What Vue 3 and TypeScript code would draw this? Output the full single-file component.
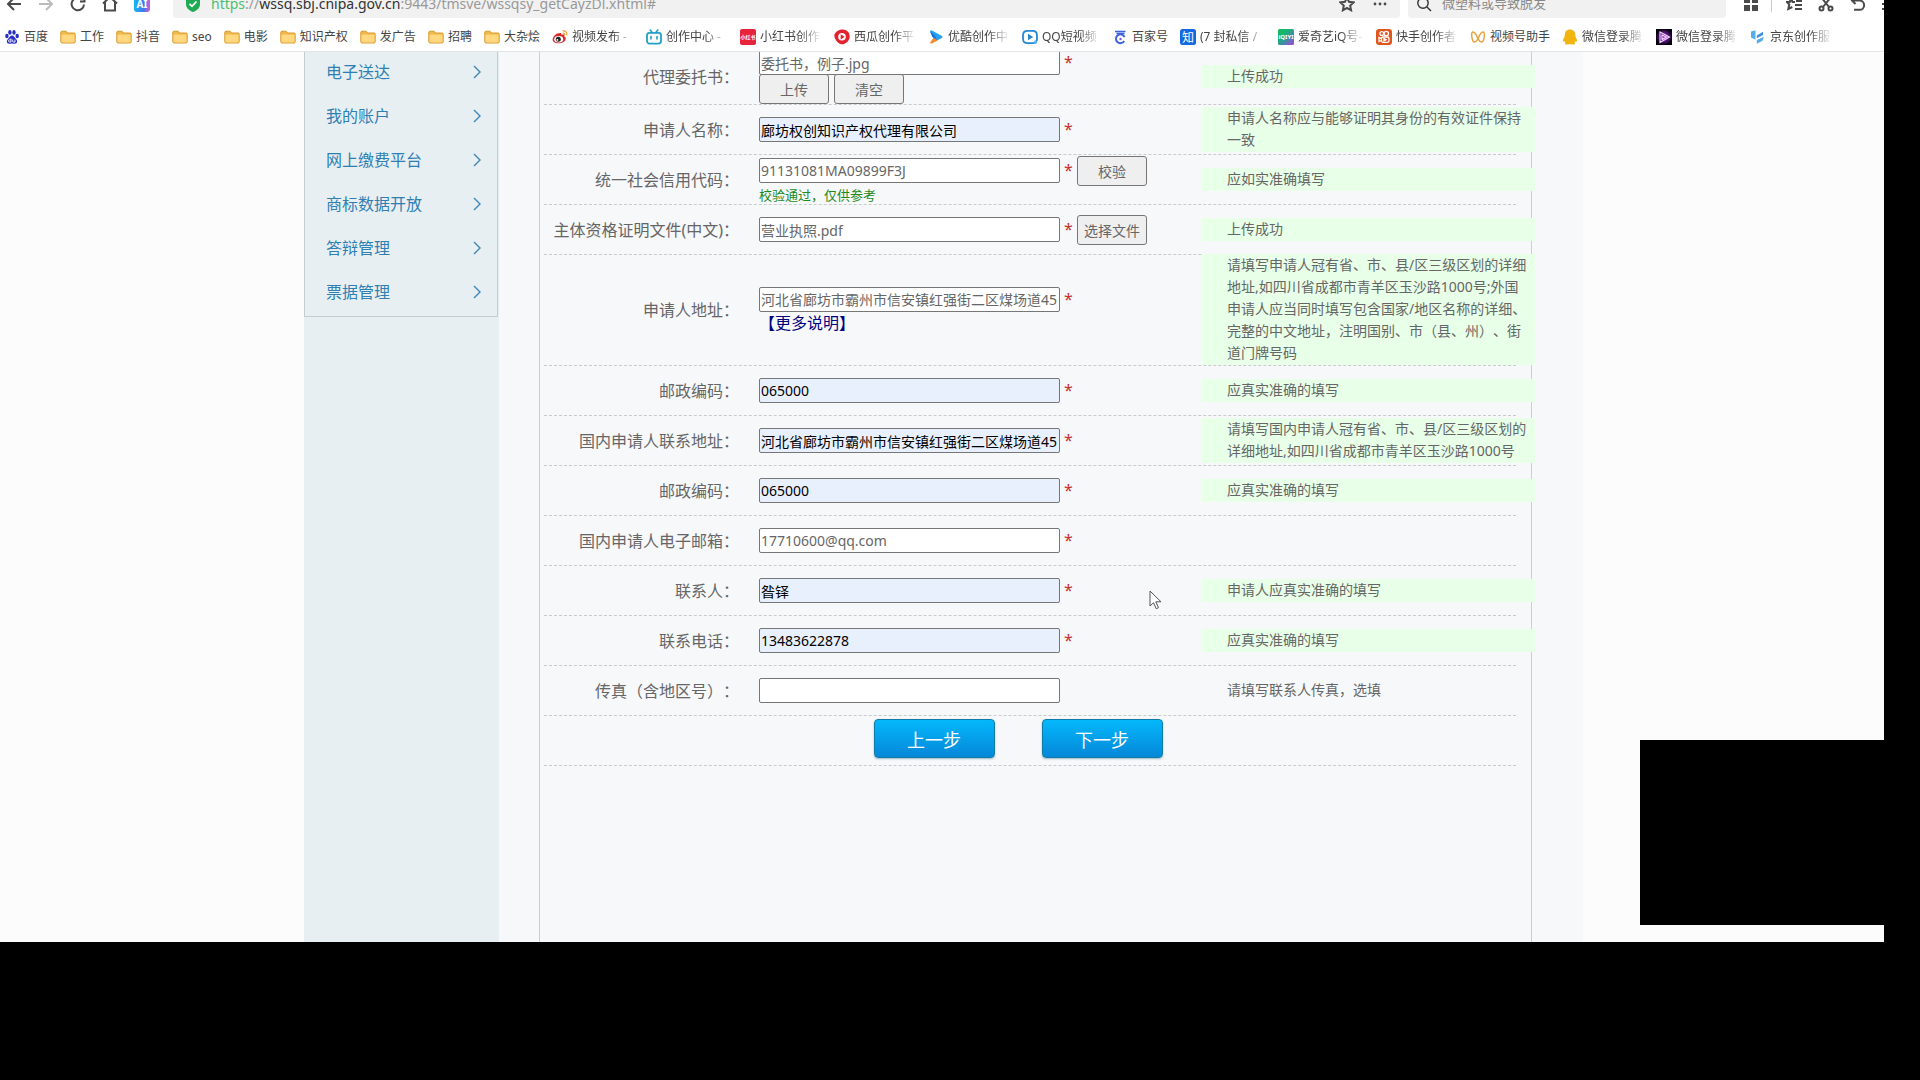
<script setup lang="ts">
import { ref } from 'vue'

interface Bookmark { label: string; icon: string; size?: 'short' | 'long' | 'wide' }
interface Field {
  id: string
  label: string
  value: string
  filled?: boolean
  required?: boolean
  action?: string
  below?: string[]
  note?: string
  more?: string
  hint?: string
  ok?: boolean
}

const icons: Record<string, string> = {
  folder: '<path d="M.8 3.4q0-1.2 1.2-1.2h4l1.6 1.8H14q1.200 0 1.200 1.200v7.600q0 1.200-1.200 1.200H2q-1.200 0-1.200-1.200z" fill="#f0b849" stroke="#d99a2b"/><path d="M1.500 6.300q0-.8.800-.8h11.400q.8 0 .8.800v6.300q0 .8-.8.800H2.300q-.8 0-.8-.8z" fill="#ffd77e"/>',
  baidu: '<g fill="#2a2fc4"><ellipse cx="2.900" cy="7" rx="1.700" ry="2.200"/><ellipse cx="5.900" cy="3.400" rx="1.700" ry="2.300"/><ellipse cx="10" cy="3.400" rx="1.700" ry="2.300"/><ellipse cx="13.200" cy="7" rx="1.700" ry="2.200"/><path d="M8 6.600c2 0 2.400 2 4 3.400 1.900 1.800 1.400 4.700-1.200 4.700-1.200 0-1.700-.3-2.800-.3s-1.600.3-2.800.3c-2.600 0-3.100-2.900-1.200-4.700 1.600-1.400 2-3.400 4-3.400z"/></g><path d="M7 9.500v3.500H5.600a1 1 0 0 1 0-2.200H7M8.700 10.600v1.700q0 .8.800.8H11v-2.500" fill="none" stroke="#fff" stroke-width=".9"/>',
  weibo: '<path d="M7 4.500c1.500-.8 2.800-.4 2.300 1.300 2-.8 3.700-.2 2.900 1.500 3 1.200 2 6.700-5.200 7C2.600 14.500.3 12.300.7 9.900 1.200 7.300 4.900 3.600 7 4.500z" fill="#d52b2b"/><ellipse cx="6.700" cy="10.300" rx="4.500" ry="3.200" fill="#fff"/><circle cx="6.300" cy="10.300" r="2.500" fill="#222"/><circle cx="5.400" cy="10.900" r=".9" fill="#fff"/><path d="M10.500 2c3-.6 5 1.500 4.300 4.400M10.700 4.200c1.400-.2 2.200.6 2 2" fill="none" stroke="#f29a2e" stroke-width="1.200"/>',
  bili: '<rect x="1" y="3.800" width="14" height="10.800" rx="2.500" fill="none" stroke="#23a0c8" stroke-width="1.800"/><path d="M4.200 1l2 2.500M11.800 1l-2 2.500M5 7.500v2.500M11 7.500v2.500" stroke="#23a0c8" stroke-width="1.600" stroke-linecap="round"/>',
  red: '<rect width="16" height="16" rx="2" fill="#e8243c"/><text x="8" y="10" font-size="5" fill="#fff" text-anchor="middle" font-weight="700">小红书</text>',
  xigua: '<path d="M9 .6c4 .2 7 3.200 6.700 7.300-.3 4-4.200 7.500-8.200 7.400C4 15.200.2 9.500.3 6.500.500 3.200 5 .4 9 .6z" fill="#e32330"/><circle cx="8" cy="7.800" r="3.800" fill="#fff"/><path d="M6.700 5.200l4 2.600-4 2.600z" fill="#e32330"/>',
  youku: '<path d="M2 2.300q.8-1.500 2.400-.6L14 7q1.200 1-.2 2L9 11.500 4.500 8z" fill="#25a2ee"/><path d="M2 13.700q.8 1.400 2.400.6L9.500 11.400 6 8z" fill="#f58a2b"/><path d="M2 2.300L4.500 8 9 11l-2.500-5z" fill="#1a6fe0"/>',
  qq: '<path d="M5.500 1.800h5q4.500 0 4.500 4.500v3.400q0 4.500-4.500 4.500h-5Q1 14.200 1 9.700V6.300q0-4.500 4.500-4.500z" fill="none" stroke="#2488d6" stroke-width="1.800"/><path d="M6 4.800l5.200 3.200L6 11.200z" fill="#2488d6"/><circle cx="13.400" cy="13.200" r="1.600" fill="#55b3f0"/>',
  baijia: '<path d="M3 2.500h10.500M4.500 4.500h8" stroke="#3f62dc" stroke-width="1.500"/><path d="M12.500 8.200A4.400 4.400 0 1 0 12.200 11.900" fill="none" stroke="#3f62dc" stroke-width="2"/><circle cx="8.500" cy="10" r="1.200" fill="#7b5be0"/>',
  zhihu: '<rect width="16" height="16" rx="2.500" fill="#1468e0"/><text x="8" y="12.500" font-size="12" fill="#fff" text-anchor="middle">知</text>',
  iqiyi: '<defs><linearGradient id="iq" x1="0" y1="0" x2="1" y2="1"><stop offset=".3" stop-color="#14b868"/><stop offset=".6" stop-color="#3f8fa8"/><stop offset="1" stop-color="#b23fd8"/></linearGradient></defs><rect width="16" height="16" rx="1.500" fill="url(#iq)"/><text x="8" y="10" font-size="6" fill="#fff" text-anchor="middle" font-weight="700">iQIYI</text>',
  kuaishou: '<rect width="16" height="16" rx="3" fill="#e0561c"/><g fill="none" stroke="#fff" stroke-width="1.300"><circle cx="5.800" cy="4.600" r="1.900"/><circle cx="10.300" cy="4.500" r="2.200"/><rect x="5.500" y="8" width="7.500" height="5.300" rx="1.500"/><path d="M5.500 9.700L3 8.600v4l2.500-1.100M8 9.500v2.300l2-1.100z"/></g>',
  channels: '<path d="M8 9.800C6.500 6 4.500 2.700 2.800 3 .6 3.400 2 13 4.300 13 5.800 13 7 11.500 8 9.800zM8 9.800C9.500 6 11.500 2.700 13.200 3c2.200.4.8 10-1.500 10C10.200 13 9 11.500 8 9.800z" fill="none" stroke="#eaa13c" stroke-width="1.500"/>',
  penguin: '<path d="M8 .6c3.500 0 5.200 2.500 5.200 5.400 0 2 1.800 4 1.900 5.700 0 1-.8 1-1.500.2-.3 1-.8 1.500-1.200 1.900.8.400 1.200 1.800-.9 1.800-1.500 0-2.600-.2-3.500-.6-.9.400-2 .6-3.500.6-2.100 0-1.700-1.400-.9-1.800-.4-.4-.9-.9-1.200-1.900-.7.800-1.500.8-1.500-.2C1 10 2.800 8 2.800 6 2.800 3.100 4.500.6 8 .6z" fill="#f2b50f"/>',
  tplay: '<defs><radialGradient id="tp"><stop offset="0" stop-color="#b82ad8"/><stop offset=".55" stop-color="#571680"/><stop offset="1" stop-color="#06030c"/></radialGradient></defs><rect width="16" height="16" fill="url(#tp)"/><path d="M4 3l9.500 5L4 13.500zM6 6l4.500 2L6 10.500z" fill="none" stroke="#f3d8ff" stroke-width="1.100"/>',
  jd: '<path d="M1 2.500l4.500-1.300v9.500L1 8.500z" fill="#54aeea"/><path d="M6.800 6.500L13 2.800v3.300L6.800 9.300z" fill="#3f8fe0"/><path d="M6.800 11l7-3.300-1.300 4-5.700 3z" fill="#54aeea"/>',
}

const bookmarks: Bookmark[] = [
  { label: '百度', icon: 'baidu' },
  { label: '工作', icon: 'folder' },
  { label: '抖音', icon: 'folder' },
  { label: 'seo', icon: 'folder' },
  { label: '电影', icon: 'folder' },
  { label: '知识产权', icon: 'folder' },
  { label: '发广告', icon: 'folder' },
  { label: '招聘', icon: 'folder' },
  { label: '大杂烩', icon: 'folder' },
  { label: '视频发布 -', icon: 'weibo', size: 'long' },
  { label: '创作中心 -', icon: 'bili', size: 'long' },
  { label: '小红书创作', icon: 'red', size: 'long' },
  { label: '西瓜创作平', icon: 'xigua', size: 'long' },
  { label: '优酷创作中', icon: 'youku', size: 'long' },
  { label: 'QQ短视频', icon: 'qq', size: 'short' },
  { label: '百家号', icon: 'baijia' },
  { label: '(7 封私信 /', icon: 'zhihu', size: 'wide' },
  { label: '爱奇艺iQ号-', icon: 'iqiyi', size: 'wide' },
  { label: '快手创作者', icon: 'kuaishou', size: 'long' },
  { label: '视频号助手', icon: 'channels' },
  { label: '微信登录腾', icon: 'penguin', size: 'long' },
  { label: '微信登录腾', icon: 'tplay', size: 'long' },
  { label: '京东创作服', icon: 'jd', size: 'long' },
]

const menu: string[] = ['电子送达', '我的账户', '网上缴费平台', '商标数据开放', '答辩管理', '票据管理']

const fields = ref<Field[]>([
  { id: 'proxy', label: '代理委托书：', value: '委托书，例子.jpg', required: true, below: ['上传', '清空'], hint: '上传成功', ok: true },
  { id: 'name', label: '申请人名称：', value: '廊坊权创知识产权代理有限公司', filled: true, required: true, hint: '申请人名称应与能够证明其身份的有效证件保持一致', ok: true },
  { id: 'code', label: '统一社会信用代码：', value: '91131081MA09899F3J', required: true, action: '校验', note: '校验通过，仅供参考', hint: '应如实准确填写', ok: true },
  { id: 'cert', label: '主体资格证明文件(中文)：', value: '营业执照.pdf', required: true, action: '选择文件', hint: '上传成功', ok: true },
  { id: 'address', label: '申请人地址：', value: '河北省廊坊市霸州市信安镇红强街二区煤场道45', required: true, more: '【更多说明】', hint: '请填写申请人冠有省、市、县/区三级区划的详细地址,如四川省成都市青羊区玉沙路1000号;外国申请人应当同时填写包含国家/地区名称的详细、完整的中文地址，注明国别、市（县、州）、街道门牌号码', ok: true },
  { id: 'zip', label: '邮政编码：', value: '065000', filled: true, required: true, hint: '应真实准确的填写', ok: true },
  { id: 'contact-address', label: '国内申请人联系地址：', value: '河北省廊坊市霸州市信安镇红强街二区煤场道45', filled: true, required: true, hint: '请填写国内申请人冠有省、市、县/区三级区划的详细地址,如四川省成都市青羊区玉沙路1000号', ok: true },
  { id: 'contact-zip', label: '邮政编码：', value: '065000', filled: true, required: true, hint: '应真实准确的填写', ok: true },
  { id: 'email', label: '国内申请人电子邮箱：', value: '17710600@qq.com', required: true },
  { id: 'contact', label: '联系人：', value: '昝铎', filled: true, required: true, hint: '申请人应真实准确的填写', ok: true },
  { id: 'phone', label: '联系电话：', value: '13483622878', filled: true, required: true, hint: '应真实准确的填写', ok: true },
  { id: 'fax', label: '传真（含地区号）：', value: '', hint: '请填写联系人传真，选填' },
])
</script>

<template>
  <div class="desktop">
    <div class="browser">
      <header class="toolbar">
        <nav class="nav">
          <button class="tool" aria-label="后退"><svg viewBox="0 0 16 16"><path d="M15 8H2M8 2L2 8l6 6" /></svg></button>
          <button class="tool off" aria-label="前进"><svg viewBox="0 0 16 16"><path d="M1 8h13M8 2l6 6-6 6" /></svg></button>
          <button class="tool" aria-label="刷新"><svg viewBox="0 0 16 16"><path d="M14 8.500A6.200 6.200 0 1 1 12 3.500M14.500 1v4.500H10" /></svg></button>
          <button class="tool" aria-label="主页"><svg viewBox="0 0 16 16"><path d="M1 7.500L8 1l7 6.500M3 6v8.500h10V6" /></svg></button>
          <button class="tool" aria-label="AI">
            <svg viewBox="0 0 16 16" class="solid">
              <defs><linearGradient id="ai" x1="0" x2="1"><stop offset="0" stop-color="#18b6f2" /><stop offset=".6" stop-color="#3d7cf0" /><stop offset="1" stop-color="#d95ad0" /></linearGradient></defs>
              <rect width="16" height="16" rx="3" fill="url(#ai)" /><text x="8" y="12" font-size="10" font-weight="700" fill="#fff" text-anchor="middle">AI</text>
            </svg>
          </button>
        </nav>
        <div class="address">
          <svg viewBox="0 0 16 16" class="shield"><path d="M8 0l7 2v6c0 4-3 6.500-7 8-4-1.500-7-4-7-8V2z" fill="#1faa53" /><path d="M4.500 7.800l2.500 2.500 4.500-4.800" fill="none" stroke="#fff" stroke-width="1.800" /></svg>
          <span class="url"><span class="scheme">https</span>://<b>wssq.sbj.cnipa.gov.cn</b>:9443/tmsve/wssqsy_getCayzDl.xhtml#</span>
          <button class="tool" aria-label="收藏"><svg viewBox="0 0 16 16"><path d="M8 1.500l2 4.300 4.700.6-3.500 3.200.9 4.700L8 12l-4.100 2.300.9-4.700L1.300 6.400 6 5.800z" /></svg></button>
          <button class="tool" aria-label="更多"><svg viewBox="0 0 16 16" class="fill"><circle cx="3" cy="8" r="1.400" /><circle cx="8" cy="8" r="1.400" /><circle cx="13" cy="8" r="1.400" /></svg></button>
        </div>
        <div class="search">
          <svg viewBox="0 0 16 16" class="glass"><circle cx="7" cy="7" r="5.200" /><path d="M11 11l4 4" /></svg>
          <input aria-label="搜索" value="微塑料或导致脱发">
        </div>
        <div class="extras">
          <button class="tool" aria-label="应用"><svg viewBox="0 0 16 16" class="fill"><path d="M1 1h6v6H1zM9 1h6v6H9zM1 9h6v6H1zM9 9h6v6H9z" /></svg></button>
          <i class="split"></i>
          <button class="tool" aria-label="收藏夹"><svg viewBox="0 0 16 16"><path d="M9 6H6.500L5 2 3.800 6H.8l2.500 2.500-1 4.500 4-2M10 5h6M9 9h7M9 13h7" /></svg></button>
          <button class="tool" aria-label="截图"><svg viewBox="0 0 16 16"><path d="M3 1l8 10M13 1L5 11" /><circle cx="3.500" cy="12.500" r="2" /><circle cx="12.500" cy="12.500" r="2" /></svg></button>
          <button class="tool" aria-label="恢复"><svg viewBox="0 0 16 16"><path d="M5.500 1L2 4.500 5.500 8M2 4.500h7.500a4.600 4.600 0 0 1 0 9.300H4" /></svg></button>
          <button class="tool" aria-label="菜单"><svg viewBox="0 0 16 16"><path d="M0 3h16M0 8h16M0 13h16" /></svg></button>
        </div>
      </header>

      <nav class="bookmarks">
        <a v-for="(b, i) in bookmarks" :key="i" href="#" class="bookmark">
          <svg viewBox="0 0 16 16" v-html="icons[b.icon]"></svg>
          <span :class="b.size">{{ b.label }}</span>
        </a>
      </nav>

      <main class="page">
        <aside class="sidebar">
          <ul class="menu">
            <li v-for="item in menu" :key="item">
              <a href="#">{{ item }}<svg viewBox="0 0 8 14"><path d="M1 1l6 6-6 6" /></svg></a>
            </li>
          </ul>
        </aside>
        <section class="content">
          <form class="form" @submit.prevent>
            <div v-for="f in fields" :key="f.id" class="row" :class="{ tall: f.below }">
              <label :for="f.id">{{ f.label }}</label>
              <div class="control">
                <div class="line">
                  <input :id="f.id" v-model="f.value" type="text" :class="{ filled: f.filled }">
                  <span v-if="f.required" class="star">*</span>
                  <button v-if="f.action" type="button" class="plain">{{ f.action }}</button>
                </div>
                <div v-if="f.below" class="pair">
                  <button v-for="b in f.below" :key="b" type="button" class="plain">{{ b }}</button>
                </div>
                <p v-if="f.note" class="note">{{ f.note }}</p>
                <a v-if="f.more" href="#" class="more">{{ f.more }}</a>
              </div>
              <p v-if="f.hint" class="hint" :class="{ ok: f.ok }">{{ f.hint }}</p>
            </div>
            <div class="steps">
              <button type="button">上一步</button>
              <button type="button">下一步</button>
            </div>
          </form>
        </section>
      </main>

      <div class="blackout"></div>
      <svg class="cursor" viewBox="0 0 13 20"><path d="M1 1v15l3.500-3.300 2.700 6 2.300-1-2.700-5.900H12z" /></svg>
    </div>
  </div>
</template>

<style>
body {
  margin: 0;
  background: #000;
}
</style>

<style scoped>
.desktop {
  box-sizing: border-box;
  display: flex;
  min-height: 100vh;
  padding: 0 36px 138px 0;
  background: #000;
  color: #666;
  font-family: "Noto Sans", "Noto Sans CJK SC", sans-serif;
  text-spacing-trim: space-all;
}
.browser {
  position: relative;
  display: flex;
  flex: 1;
  flex-direction: column;
  min-width: 0;
  overflow: hidden;
  background: #fcfcfc;
}
button, input {
  font-family: inherit;
}
p, ul {
  margin: 0;
  padding: 0;
}
a {
  text-decoration: none;
}

.toolbar, .bookmarks {
  position: relative;
  z-index: 1;
  display: flex;
  flex: none;
  overflow: hidden;
  background: #fff;
}
.toolbar {
  align-items: flex-end;
  height: 18px;
}
.nav, .address, .search, .extras {
  box-sizing: border-box;
  display: flex;
  flex: none;
  align-items: center;
  height: 28px;
}
.nav {
  gap: 16px;
  padding: 0 23px 0 6px;
}
.tool {
  flex: none;
  width: 16px;
  height: 16px;
  padding: 0;
  border: 0;
  background: none;
}
.tool svg, .glass {
  display: block;
  width: 16px;
  height: 16px;
  fill: none;
  stroke: #4a4a4a;
  stroke-width: 2;
}
.tool.off svg {
  stroke: #bbb;
}
.tool .solid {
  stroke: none;
}
.tool .fill {
  fill: #4a4a4a;
  stroke: none;
}
.address {
  flex: 1;
  gap: 17px;
  min-width: 0;
  padding: 0 12px;
  border-radius: 4px;
  background: #f1f1f1;
}
.shield {
  flex: none;
  width: 16px;
  height: 16px;
}
.url {
  flex: 1;
  margin-left: -7px;
  color: #999;
  font-size: 14px;
  line-height: 20px;
  white-space: nowrap;
}
.url b {
  color: #333;
  font-weight: 400;
}
.scheme {
  color: #4cbf72;
}
.search {
  gap: 10px;
  width: 318px;
  margin-left: 8px;
  padding: 0 8px;
  border-radius: 4px;
  background: #f1f1f1;
}
.glass {
  flex: none;
  stroke: #333;
  stroke-width: 1.400;
}
.search input {
  flex: 1;
  min-width: 0;
  padding: 0 0 3px;
  border: 0;
  background: none;
  color: #888;
  font-size: 13px;
}
.extras {
  gap: 16px;
  width: 158px;
  padding-left: 17px;
  overflow: hidden;
}
.split {
  flex: none;
  width: 1px;
  height: 16px;
  margin: 0 -2px 0 -4px;
  background: #ccc;
}

.bookmarks {
  box-sizing: border-box;
  align-items: center;
  gap: 12px;
  height: 34px;
  padding: 4px 4px 0;
  border-bottom: 1px solid #e2e6e9;
}
.bookmark {
  display: flex;
  flex: none;
  align-items: center;
  gap: 4px;
  color: #444;
  font-size: 12px;
  line-height: 18px;
  white-space: nowrap;
}
.bookmark svg {
  width: 16px;
  height: 16px;
}
.short, .long, .wide {
  overflow: hidden;
  mask-image: linear-gradient(to right, #000 65%, transparent);
}
.short {
  width: 58px;
}
.long {
  width: 62px;
}
.wide {
  width: 66px;
}

.page {
  display: flex;
  flex: 1;
  justify-content: center;
  margin-top: -2px;
  padding-left: 3px;
}
.sidebar {
  flex: none;
  width: 195px;
  background: #e8eff3;
}
.menu {
  box-sizing: border-box;
  width: 194px;
  padding-bottom: 2px;
  border: 1px solid #c6cbcf;
  border-top: 0;
  list-style: none;
}
.menu a {
  display: flex;
  align-items: center;
  justify-content: space-between;
  height: 44px;
  padding: 0 16px 0 21px;
  color: #2f7fb3;
  font-size: 16px;
  line-height: 24px;
}
.menu svg {
  width: 8px;
  height: 14px;
  fill: none;
  stroke: #3d86b6;
  stroke-width: 1.400;
}

.content {
  box-sizing: border-box;
  display: flex;
  flex: none;
  width: 1084px;
  padding: 0 51px 0 40px;
  background: #f7f8fa;
}
.form {
  box-sizing: border-box;
  flex: 1;
  padding: 0 15px 0 4px;
  border: solid #ccced1;
  border-width: 0 1px;
}
.row {
  box-sizing: border-box;
  display: grid;
  grid-template-columns: 215px 443px 1fr;
  align-items: center;
  min-height: 50px;
  border-bottom: 1px dashed #c8cacc;
}
.row.tall {
  min-height: 55px;
}
.row label {
  padding-right: 20px;
  font-size: 16px;
  line-height: 24px;
  text-align: right;
  white-space: nowrap;
}
.line {
  display: flex;
  align-items: center;
}
.line input {
  box-sizing: border-box;
  width: 301px;
  height: 25px;
  padding: 0 1px;
  border: 1px solid #767676;
  border-radius: 2px;
  background: #fff;
  color: #666;
  font-size: 14px;
}
.line .filled {
  background: #e8f0fe;
  color: #000;
}
.star {
  width: 9px;
  margin: 0 4px;
  color: #c9302c;
  font-size: 16px;
  line-height: 25px;
}
.plain {
  width: 70px;
  height: 30px;
  padding: 0;
  border: 1px solid #767676;
  border-radius: 3px;
  background: #efefef;
  color: #666;
  font-size: 14px;
}
.pair {
  display: flex;
  gap: 5px;
  margin-top: -1px;
}
.note {
  color: #1c8a1c;
  font-size: 13px;
  line-height: 18px;
}
.more {
  display: block;
  color: #000080;
  font-size: 16px;
  line-height: 22px;
}
.hint {
  margin: -1px -19px 0 0;
  padding: 0 3px 1px 25px;
  font-size: 14px;
  line-height: 22px;
}
.hint.ok {
  background: #e8ffe8;
}
.steps {
  box-sizing: border-box;
  display: flex;
  justify-content: center;
  gap: 47px;
  height: 50px;
  padding: 3px 24px 0 0;
  border-bottom: 1px dashed #c8cacc;
}
.steps button {
  width: 121px;
  height: 39px;
  padding: 0;
  border: 1px solid #0e7ba8;
  border-radius: 4px;
  background: linear-gradient(#04b8fb, #0587d8);
  box-shadow: 0 1px 2px #9db6c4;
  color: #fff;
  font-size: 18px;
}

.blackout {
  position: absolute;
  right: 0;
  bottom: 17px;
  width: 244px;
  height: 185px;
  background: #000;
}
.cursor {
  position: absolute;
  top: 590px;
  left: 1149px;
  width: 13px;
  height: 20px;
  fill: #fff;
  stroke: #555;
  stroke-width: 1;
}
</style>
